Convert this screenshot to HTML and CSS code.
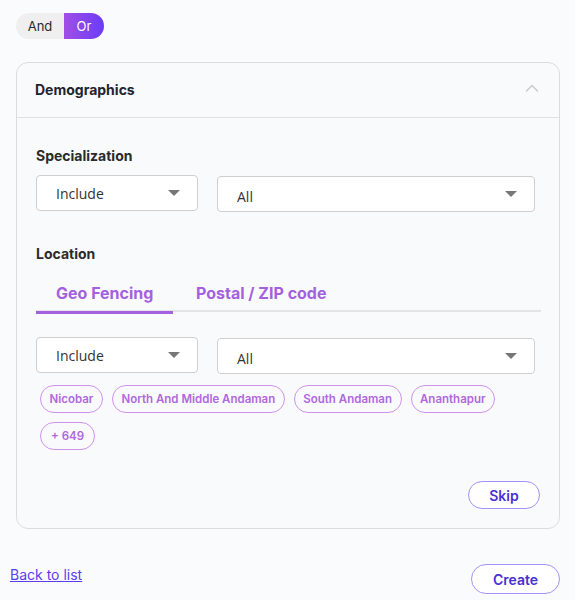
FILE: index.html
```html
<!DOCTYPE html>
<html>
<head>
<meta charset="utf-8">
<link rel="stylesheet" href="styles.css">
</head>
<body>
<div class="page">
  <div class="toggle">
    <span class="tog-and">And</span>
    <span class="tog-or">Or</span>
  </div>

  <div class="card">
    <div class="card-head">
      <span class="card-title">Demographics</span>
      <svg class="chev" width="14" height="8" viewBox="0 0 14 8"><path d="M1 7.5 L7 1.5 L13 7.5" fill="none" stroke="#c8c8c8" stroke-width="1.3"/></svg>
    </div>
    <div class="card-body">
      <div class="label">Specialization</div>
      <div class="row">
        <div class="select small"><span>Include</span><span class="caret"></span></div>
        <div class="select big"><span>All</span><span class="caret"></span></div>
      </div>

      <div class="label loc">Location</div>
      <div class="tabs">
        <div class="tab active">Geo Fencing</div>
        <div class="tab">Postal / ZIP code</div>
      </div>
      <div class="row row2">
        <div class="select small"><span>Include</span><span class="caret"></span></div>
        <div class="select big"><span>All</span><span class="caret"></span></div>
      </div>
      <div class="chips">
        <span class="chip">Nicobar</span>
        <span class="chip">North And Middle Andaman</span>
        <span class="chip">South Andaman</span>
        <span class="chip">Ananthapur</span>
        <span class="chip more">+ 649</span>
      </div>
      <div class="skip-row"><button class="btn skip">Skip</button></div>
    </div>
  </div>

  <div class="footer">
    <a class="back" href="#">Back to list</a>
    <button class="btn create">Create</button>
  </div>
</div>
</body>
</html>
```

FILE: styles.css
```css
* { box-sizing: border-box; }
html, body { margin: 0; padding: 0; background: #fafbfd; }
body { font-family: "Inter", "Liberation Sans", sans-serif; color: #222; }
.page { padding: 13px 15px 0 10px; width: 575px; }

.toggle { display: inline-flex; margin-left: 6px; height: 26px; border-radius: 13px; overflow: hidden; font-size: 13px; }
.tog-and { background: #efefef; color: #2a2a2a; width: 48px; display: flex; align-items: center; justify-content: center; }
.tog-or { background: linear-gradient(90deg, #a14fe6, #6a3cf6); color: #fff; width: 40px; display: flex; align-items: center; justify-content: center; }

.card { margin-top: 23px; margin-left: 6px; width: 544px; height: 467px; border: 1px solid #dcdcdc; border-radius: 12px; background: #f9fafc; }
.card-head { height: 55px; border-bottom: 1px solid #e2e2e2; display: flex; align-items: center; justify-content: space-between; padding: 0 20px 0 18px; }
.card-title { font-weight: 700; font-size: 14px; color: #1f2430; margin-top: -2px; }
.chev { margin-top: -4px; }
.card-body { padding: 29px 19px 0 19px; }

.label { font-weight: 700; font-size: 14px; color: #2b2b2b; height: 18px; }
.label.loc { margin-top: 33px; }
.row { display: flex; gap: 19px; margin-top: 10px; align-items: flex-start; }
.row2 { margin-top: 25px; }
.select { height: 36px; border: 1px solid #cfcfcf; border-radius: 4px; background: #fff; display: flex; align-items: center; justify-content: space-between; padding: 0 17px 0 19px; font-family: "Open Sans", sans-serif; font-size: 14px; color: #333; }
.select.small { width: 162px; }
.select.big { width: 318px; margin-top: 1px; }
.select.big span:first-child { margin-top: 4px; }
.caret { width: 0; height: 0; border-left: 6px solid transparent; border-right: 6px solid transparent; border-top: 6px solid #777; }

.tabs { display: flex; margin-top: 20px; width: 505px; border-bottom: 2px solid #e4e4e4; height: 29px; }
.tab { font-weight: 700; font-size: 16px; color: #a461df; padding: 0 20px; height: 29px; line-height: 20px; white-space: nowrap; }
.tab.active { width: 137px; border-bottom: 3px solid #a461df; margin-bottom: -2px; height: 31px; }
.tab:nth-child(2) { padding-left: 23px; }

.chips { display: flex; flex-wrap: wrap; gap: 9px 9px; margin-top: 11px; padding-left: 4px; width: 480px; }
.chip { height: 28px; border: 1.5px solid #cf93ec; border-radius: 14px; color: #b068dc; font-size: 11.5px; font-weight: 600; padding: 0 8.5px; display: inline-flex; align-items: center; }
.chip.more { padding: 0 10px; }

.skip-row { display: flex; justify-content: flex-end; margin-top: 31px; padding-right: 0; }
.btn { background: #fff; border: 1.5px solid #a492f7; border-radius: 14px; font-family: "Inter", sans-serif; font-weight: 600; color: #4a2fd1; font-size: 14px; cursor: pointer; }
.skip { width: 72px; height: 28px; }

.footer { display: flex; justify-content: space-between; align-items: flex-start; margin-top: 35px; }
.back { color: #5a3ef0; font-size: 14px; text-decoration: underline; margin-top: 2px; }
.create { width: 89px; height: 30px; border-radius: 15px; font-size: 14px; }
```
